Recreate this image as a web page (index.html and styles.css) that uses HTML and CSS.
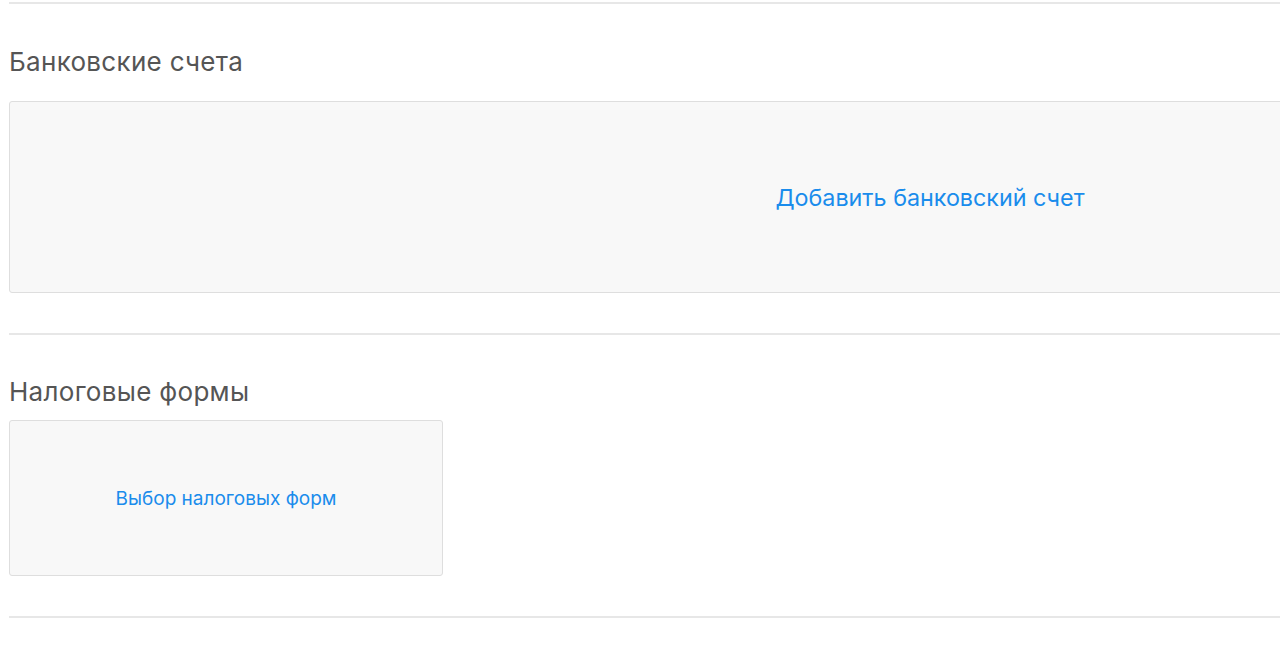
FILE: index.html
```html
<!DOCTYPE html>
<html lang="ru">
<head>
<meta charset="utf-8">
<link rel="stylesheet" href="styles.css">
</head>
<body>
<div class="page">
  <div class="rule rule-top"></div>
  <section class="section section-bank">
    <h2 class="title">Банковские счета</h2>
    <div class="panel panel-wide">
      <a class="add-link add-link-lg" href="#">Добавить банковский счет</a>
    </div>
  </section>
  <div class="rule"></div>
  <section class="section section-tax">
    <h2 class="title">Налоговые формы</h2>
    <div class="panel panel-small">
      <a class="add-link add-link-sm" href="#">Выбор налоговых форм</a>
    </div>
  </section>
  <div class="rule"></div>
</div>
</body>
</html>
```

FILE: styles.css
```css
html, body {
  margin: 0;
  padding: 0;
  background: #ffffff;
  overflow: hidden;
}
body {
  font-family: "Inter", "Liberation Sans", sans-serif;
  width: 1280px;
  height: 648px;
}
.page {
  padding: 2px 0 0 9px;
  width: 1900px;
}
.rule {
  height: 0;
  border-top: 2px solid #e7e7e7;
}
.section-bank {
  padding-top: 42px;
  padding-bottom: 40px;
}
.section-tax {
  padding-top: 41px;
  padding-bottom: 40px;
}
.title {
  margin: 0;
  font-size: 26px;
  font-weight: 400;
  color: #555555;
  line-height: 32px;
  letter-spacing: 0.3px;
}
.section-bank .title {
  margin-bottom: 23px;
}
.section-tax .title {
  margin-bottom: 12px;
}
.panel {
  background: #f8f8f8;
  border: 1px solid #dedede;
  border-radius: 3px;
  display: flex;
  align-items: center;
  justify-content: center;
  box-sizing: border-box;
}
.panel-wide {
  width: 1842px;
  height: 192px;
}
.panel-small {
  width: 434px;
  height: 156px;
}
.add-link {
  color: #1a8cec;
  text-decoration: none;
}
.add-link-lg {
  font-size: 23.3px;
}
.add-link-sm {
  font-size: 19px;
}
```
